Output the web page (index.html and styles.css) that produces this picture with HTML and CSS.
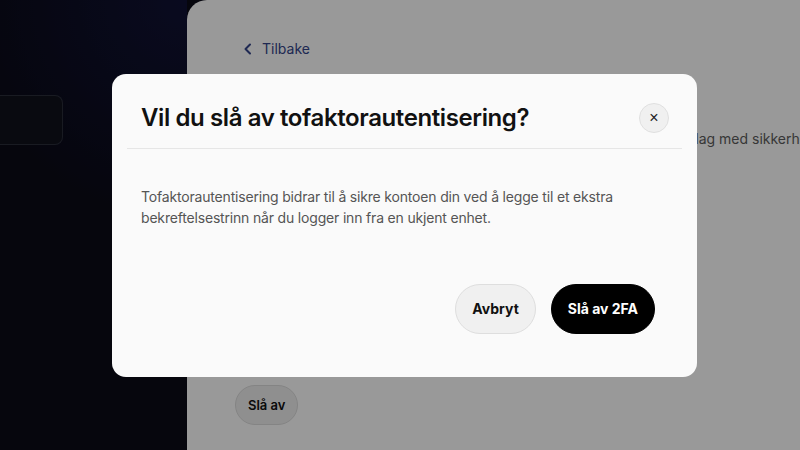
FILE: index.html
```html
<!DOCTYPE html>
<html lang="no">
<head>
  <meta charset="UTF-8" />
  <meta name="viewport" content="width=device-width, initial-scale=1.0"/>
  <title>Tofaktorautentisering</title>
  <link rel="stylesheet" href="styles.css">
</head>
<body>

  <div class="app">
    <!-- Sidebar -->
    <aside class="sidebar">
      <div class="side-card"></div>
    </aside>

    <!-- Innhold -->
    <main class="panel">
      <a class="back" href="#">
        <svg width="10" height="12" viewBox="0 0 10 12"><path d="M7 1.5 2.5 6 7 10.5" fill="none" stroke="currentColor" stroke-width="2" stroke-linecap="round" stroke-linejoin="round"/></svg>
        Tilbake
      </a>
      <h2 class="page-title">Tofaktorautentisering</h2>
      <p class="page-text">Tofaktorautentisering er aktivert for kontoen din og gir et ekstra lag med sikkerhet ved innlogging.</p>
      <p class="page-sub">Du blir bedt om en kode fra autentiseringsappen hver gang du logger inn fra en ny enhet.</p>
      <button class="btn-ghost">Slå av</button>
    </main>
  </div>

  <!-- Modal -->
  <div class="overlay">
    <div class="modal">
      <div class="modal-head">
        <h1>Vil du slå av tofaktorautentisering?</h1>
        <button class="close-btn">&times;</button>
      </div>
      <p class="modal-text">Tofaktorautentisering bidrar til å sikre kontoen din ved å legge til et ekstra bekreftelsestrinn når du logger inn fra en ukjent enhet.</p>
      <div class="modal-actions">
        <button class="btn btn-light">Avbryt</button>
        <button class="btn btn-dark">Slå av 2FA</button>
      </div>
    </div>
  </div>

</body>
</html>
```

FILE: styles.css
```css
* { box-sizing: border-box; }

body {
  margin: 0;
  font-family: 'Inter', 'Lato', sans-serif;
  background: #0a0a17;
  overflow: hidden;
}

.app {
  display: flex;
  height: 450px;
}

.sidebar {
  width: 187px;
  flex-shrink: 0;
  background: radial-gradient(circle at 100% 0, #101235 0, #0a0a17 45%);
  padding-top: 95px;
}

.side-card {
  width: 63px;
  height: 50px;
  border: 1px solid #2a2d3a;
  border-left: none;
  border-radius: 0 8px 8px 0;
  background: #10111c;
}

.panel {
  flex: 1;
  background: #fff;
  border-radius: 20px 0 0 0;
  padding: 39px 0 0 48px;
  overflow: hidden;
}

.back {
  display: inline-flex;
  align-items: center;
  gap: 9px;
  padding-left: 8px;
  color: #34458a;
  text-decoration: none;
  font-size: 14px;
  line-height: 20px;
}

.page-title {
  margin: 32px 0 8px;
  font-size: 24px;
  line-height: 30px;
  font-weight: 600;
  color: #111;
}

.page-text {
  margin: 0;
  width: 620px;
  white-space: nowrap;
  text-indent: 37px;
  font-size: 14px;
  line-height: 20px;
  color: #5c5c5c;
}

.page-sub {
  margin: 14px 0 182px;
  width: 440px;
  font-size: 14px;
  line-height: 20px;
  color: #5c5c5c;
}

.btn-ghost {
  height: 40px;
  padding: 0 12px;
  border: 1px solid #dcdcdc;
  border-radius: 20px;
  background: #efefef;
  font-family: inherit;
  font-size: 13px;
  font-weight: 600;
  color: #111;
}

.overlay {
  position: fixed;
  top: 0; left: 0;
  width: 100%; height: 100%;
  background: rgba(0,0,0,0.4);
  display: flex;
  justify-content: center;
  align-items: center;
  padding-left: 9px;
}

.modal {
  width: 585px;
  background: #fafafa;
  border-radius: 14px;
  padding-bottom: 43px;
}

.modal-head {
  display: flex;
  align-items: center;
  justify-content: space-between;
  margin: 0 15px;
  padding: 29px 13px 15px 14px;
  border-bottom: 1px solid #e6e6e6;
}

.modal-head h1 {
  margin: 0;
  font-size: 24px;
  line-height: 30px;
  font-weight: 600;
  letter-spacing: -0.4px;
  color: #111;
}

.close-btn {
  width: 30px;
  height: 30px;
  border-radius: 50%;
  border: 1px solid #e0e0e0;
  background: #f0f0f0;
  font-size: 16px;
  line-height: 1;
  color: #222;
  padding: 0;
}

.modal-text {
  margin: 0;
  padding: 37px 29px 0;
  font-size: 14px;
  line-height: 21px;
  letter-spacing: -0.18px;
  color: #555;
}

.modal-actions {
  display: flex;
  justify-content: flex-end;
  gap: 15px;
  margin-top: 56px;
  padding-right: 42px;
}

.btn {
  height: 50px;
  padding: 0 16px;
  border-radius: 25px;
  font-family: inherit;
  font-size: 14px;
  font-weight: 700;
}

.btn-light {
  background: #f0f0f0;
  border: 1px solid #dedede;
  color: #111;
}

.btn-dark {
  background: #000;
  border: 1px solid #000;
  color: #fff;
}
```
